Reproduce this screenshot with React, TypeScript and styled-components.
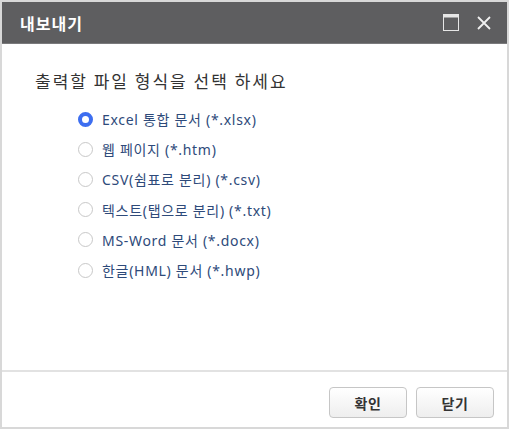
import React, { useState } from "react";
import styled, { createGlobalStyle } from "styled-components";

const Global = createGlobalStyle`
  html, body { margin: 0; padding: 0; background: #ffffff; }
  * { box-sizing: border-box; }
  body { font-family: "Noto Sans", "Noto Sans CJK KR", sans-serif; }
`;

const Dialog = styled.div`
  width: 509px;
  height: 429px;
  border: 2px solid #d8d8d8;
  display: flex;
  flex-direction: column;
  background: #fff;
`;

const TitleBar = styled.div`
  height: 42px;
  background: #5e5e60;
  border-bottom: 1px solid #7a7a7c;
  display: flex;
  align-items: center;
  padding: 0 12px 0 18px;
`;

const Title = styled.div`
  flex: 1;
  color: #fff;
  font-family: "Noto Sans CJK KR", sans-serif;
  font-size: 16px;
  font-weight: 700;
  letter-spacing: 1px;
`;

const IconButton = styled.button`
  width: 22px;
  height: 22px;
  margin-left: 11px;
  padding: 0;
  border: 0;
  background: transparent;
  display: flex;
  align-items: center;
  justify-content: center;
`;

const Body = styled.div`
  flex: 1;
  padding: 26px 0 0 33px;
`;

const Heading = styled.div`
  font-family: "Noto Sans CJK KR", sans-serif;
  font-size: 17px;
  color: #333;
  line-height: 22px;
  letter-spacing: 2px;
  margin-bottom: 12px;
`;

const OptionList = styled.div`
  display: flex;
  flex-direction: column;
  padding-left: 43px;
`;

const OptionRow = styled.label`
  display: flex;
  align-items: center;
  height: 30.2px;
  cursor: pointer;
`;

const Radio = styled.span<{ $checked: boolean }>`
  width: 15px;
  height: 15px;
  border-radius: 50%;
  border: ${(p) => (p.$checked ? "4px solid #3d6ef0" : "1px solid #c8c8c8")};
  background: #fff;
  margin-right: 9px;
  flex-shrink: 0;
`;

const OptionText = styled.span`
  font-size: 14px;
  color: #2e4a7a;
  letter-spacing: 0.7px;
`;

const Footer = styled.div`
  height: 57px;
  border-top: 2px solid #e2e2e2;
  display: flex;
  justify-content: flex-end;
  align-items: flex-start;
  gap: 9px;
  padding: 15px 13px 0 0;
`;

const Button = styled.button`
  width: 78px;
  height: 31px;
  border: 1px solid #c6c6c6;
  border-radius: 4px;
  background: linear-gradient(#ffffff, #eeeeee);
  font-family: "Noto Sans CJK KR", sans-serif;
  font-size: 14px;
  font-weight: 700;
  color: #333;
  letter-spacing: 0.5px;
  padding: 0;
`;

const options = [
  "Excel 통합 문서 (*.xlsx)",
  "웹 페이지 (*.htm)",
  "CSV(쉼표로 분리) (*.csv)",
  "텍스트(탭으로 분리) (*.txt)",
  "MS-Word 문서 (*.docx)",
  "한글(HML) 문서 (*.hwp)",
];

export default function App() {
  const [sel, setSel] = useState(0);
  return (
    <>
      <Global />
      <Dialog>
        <TitleBar>
          <Title>내보내기</Title>
          <IconButton aria-label="maximize">
            <svg width="16" height="17" viewBox="0 0 16 17">
              <rect x="0.5" y="0.5" width="15" height="16" fill="none" stroke="#e6e6e6" strokeWidth="1" />
              <rect x="0.5" y="0.5" width="15" height="3" fill="#e6e6e6" />
            </svg>
          </IconButton>
          <IconButton aria-label="close">
            <svg width="16" height="16" viewBox="0 0 16 16">
              <path d="M2 2 L14 14 M14 2 L2 14" stroke="#f0f0f0" strokeWidth="1.8" />
            </svg>
          </IconButton>
        </TitleBar>
        <Body>
          <Heading>출력할 파일 형식을 선택 하세요</Heading>
          <OptionList>
            {options.map((o, i) => (
              <OptionRow key={o} onClick={() => setSel(i)}>
                <Radio $checked={sel === i} />
                <OptionText>{o}</OptionText>
              </OptionRow>
            ))}
          </OptionList>
        </Body>
        <Footer>
          <Button>확인</Button>
          <Button>닫기</Button>
        </Footer>
      </Dialog>
    </>
  );
}
